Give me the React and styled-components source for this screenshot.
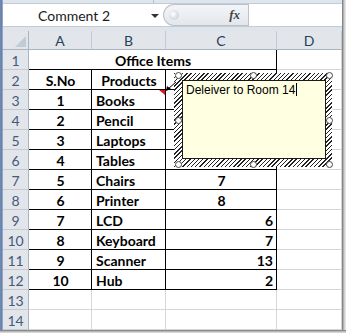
import React from 'react';
import styled, { createGlobalStyle } from 'styled-components';

const GlobalStyle = createGlobalStyle`
  html, body {
    margin: 0;
    padding: 0;
    background: #ffffff;
  }
`;

const Frame = styled.div`
  position: relative;
  width: 346px;
  height: 333px;
  overflow: hidden;
  display: flex;
  flex-direction: column;
  background: #ffffff;
  font-family: "Lato", "Liberation Sans", sans-serif;
`;

const Body = styled.div`
  display: flex;
  height: 330px;
`;

const LeftEdge = styled.div`
  width: 3px;
  background: linear-gradient(90deg, #8ea4c4 0, #4f6d9c 1px, #a9bbd4 3px);
`;

const RightShadow = styled.div`
  width: 4px;
  background: linear-gradient(90deg, #6f6f6f 0, #9a9a9a 1px, #c8c8c8 2px, #eeeeee 4px);
`;

const BottomShadow = styled.div`
  height: 3px;
  background: linear-gradient(180deg, #6f6f6f 0, #a8a8a8 1px, #e6e6e6 3px);
`;

const Main = styled.div`
  width: 339px;
  display: flex;
  flex-direction: column;
`;

const TopStrip = styled.div`
  height: 4px;
  display: flex;
  background: #dfe5ec;
  border-bottom: 1px solid #c3cbd5;
  box-sizing: border-box;
`;

const StripPart = styled.div`
  width: ${p => p.$w}px;
  border-right: 1px solid #b8c1cc;
`;

const FormulaBar = styled.div`
  height: 23px;
  display: flex;
  align-items: stretch;
  background: #ffffff;
  border-bottom: 1px solid #c3cbd5;
  box-sizing: border-box;
`;

const NameBox = styled.div`
  width: 160px;
  display: flex;
  align-items: center;
  justify-content: space-between;
  padding: 0 4px 0 35px;
  box-sizing: border-box;
  font-size: 14px;
  color: #1a1a1a;
`;

const DropArrow = styled.span`
  width: 0;
  height: 0;
  border-left: 4px solid transparent;
  border-right: 4px solid transparent;
  border-top: 4px solid #333;
  margin-top: 1px;
`;

const FxGroup = styled.div`
  width: 85px;
  display: flex;
  align-items: center;
  justify-content: space-between;
  padding: 0 8px 0 5px;
  box-sizing: border-box;
  border-radius: 11px 0 0 11px;
  border: 1px solid #b9c2cd;
  border-right: none;
  background: linear-gradient(180deg, #f3f5f8 0, #e3e7ec 100%);
`;

const Grip = styled.span`
  width: 10px;
  height: 10px;
  border-radius: 50%;
  background: radial-gradient(circle at 40% 40%, #ffffff 0, #d7dce2 60%, #b9c0c9 100%);
`;

const FxLabel = styled.span`
  font-family: "Liberation Serif", serif;
  font-style: italic;
  font-weight: bold;
  font-size: 13px;
  color: #444;
`;

const FormulaInput = styled.div`
  flex: 1;
  border-left: 1px solid #b9c2cd;
  background: #ffffff;
`;

const Gap = styled.div`
  height: 4px;
  background: #dfe4ea;
`;

const Sheet = styled.div`
  display: grid;
  grid-template-columns: 26px 63px 74px 111px 65px;
  grid-template-rows: 19px repeat(14, 20px);
`;

const Corner = styled.div`
  position: relative;
  background: #e2e6eb;
  border-right: 1px solid #a9b4c2;
  border-bottom: 1px solid #a9b4c2;
  box-sizing: border-box;
  &::after {
    content: '';
    position: absolute;
    right: 2px;
    bottom: 2px;
    border-left: 11px solid transparent;
    border-bottom: 11px solid #c2cad4;
  }
`;

const ColHeader = styled.div`
  display: flex;
  align-items: center;
  justify-content: center;
  background: #e2e6eb;
  border-right: 1px solid #c4cad2;
  border-bottom: 1px solid #a9b4c2;
  box-sizing: border-box;
  font-size: 14px;
  color: #27405e;
`;

const RowHeader = styled.div`
  display: flex;
  align-items: center;
  justify-content: center;
  padding-top: 1px;
  background: #e2e6eb;
  border-right: 1px solid #a9b4c2;
  border-bottom: 1px solid #c4cad2;
  box-sizing: border-box;
  font-size: 14px;
  color: #45597a;
`;

const Cell = styled.div`
  position: relative;
  display: flex;
  align-items: center;
  justify-content: ${p => p.$align === 'center' ? 'center' : p.$align === 'right' ? 'flex-end' : 'flex-start'};
  padding: 2px 3px 0 4px;
  grid-column: ${p => p.$span ? `span ${p.$span}` : 'auto'};
  border-right: 1px solid ${p => p.$boxed ? '#000000' : '#d6d6d6'};
  border-bottom: 1px solid ${p => p.$boxed ? '#000000' : '#d6d6d6'};
  box-sizing: border-box;
  font-size: 14px;
  font-weight: ${p => p.$bold ? 700 : 400};
  color: #000000;
  white-space: nowrap;
  overflow: hidden;
`;

const CommentMark = styled.span`
  position: absolute;
  top: 0;
  right: 0;
  border-left: 6px solid transparent;
  border-top: 5px solid #e8141c;
`;

const Comment = styled.div`
  position: absolute;
  left: 174px;
  top: 73px;
  width: 158px;
  height: 94px;
  padding: 7px 6px 8px 8px;
  box-sizing: border-box;
  background: repeating-linear-gradient(135deg, #222222 0 1px, #ffffff 1px 3px);
`;

const Note = styled.div`
  height: 100%;
  box-sizing: border-box;
  background: #ffffe1;
  border: 1px solid #1a1a1a;
  padding: 2px 3px;
  font-family: "Liberation Sans", Arial, sans-serif;
  font-size: 12px;
  line-height: 15px;
  color: #000;
`;

const Caret = styled.span`
  display: inline-block;
  width: 1px;
  height: 13px;
  margin-left: 1px;
  vertical-align: -2px;
  background: #000;
`;

const Handle = styled.span`
  position: absolute;
  left: ${p => p.$x}px;
  top: ${p => p.$y}px;
  width: 5px;
  height: 5px;
  border-radius: 50%;
  background: #ffffff;
  border: 1px solid #4a4a4a;
`;

const Pointer = styled.svg`
  position: absolute;
  left: 164px;
  top: 80px;
`;

const columns = ['A', 'B', 'C', 'D'];

const items = [
  [1, 'Books', '', ''],
  [2, 'Pencil', '', ''],
  [3, 'Laptops', '', ''],
  [4, 'Tables', '', ''],
  [5, 'Chairs', '7', 'center'],
  [6, 'Printer', '8', 'center'],
  [7, 'LCD', '6', 'right'],
  [8, 'Keyboard', '7', 'right'],
  [9, 'Scanner', '13', 'right'],
  [10, 'Hub', '2', 'right'],
];

const handles = [
  [1, -1], [76, -1], [152, -1],
  [1, 44], [152, 44],
  [1, 88], [76, 88], [152, 88],
];

export default function App() {
  return (
    <>
      <GlobalStyle />
      <Frame>
        <Body>
          <LeftEdge />
          <Main>
            <TopStrip>
              <StripPart $w={150} />
            </TopStrip>
            <FormulaBar>
              <NameBox>
                Comment 2
                <DropArrow />
              </NameBox>
              <FxGroup>
                <Grip />
                <FxLabel>fx</FxLabel>
              </FxGroup>
              <FormulaInput />
            </FormulaBar>
            <Gap />
            <Sheet>
              <Corner />
              {columns.map(c => <ColHeader key={c}>{c}</ColHeader>)}

              <RowHeader>1</RowHeader>
              <Cell $span={3} $bold $boxed $align="center">Office Items</Cell>
              <Cell />

              <RowHeader>2</RowHeader>
              <Cell $bold $boxed $align="center">S.No</Cell>
              <Cell $bold $boxed $align="center">Products</Cell>
              <Cell $bold $boxed $align="center" />
              <Cell />

              {items.map(([no, name, qty, align], i) => (
                <React.Fragment key={no}>
                  <RowHeader>{i + 3}</RowHeader>
                  <Cell $bold $boxed $align="center">{no}</Cell>
                  <Cell $bold $boxed>
                    {name}
                    {i === 0 && <CommentMark />}
                  </Cell>
                  <Cell $bold $boxed $align={align}>{qty}</Cell>
                  <Cell />
                </React.Fragment>
              ))}

              {[13, 14].map(r => (
                <React.Fragment key={r}>
                  <RowHeader>{r}</RowHeader>
                  <Cell />
                  <Cell />
                  <Cell />
                  <Cell />
                </React.Fragment>
              ))}
            </Sheet>
          </Main>
          <RightShadow />
        </Body>
        <BottomShadow />

        <Comment>
          <Note>
            Deleiver to Room 14<Caret />
          </Note>
          {handles.map(([x, y], i) => <Handle key={i} $x={x} $y={y} />)}
        </Comment>

        <Pointer width="14" height="14" viewBox="0 0 14 14">
          <line x1="12" y1="2" x2="4" y2="9" stroke="#000" strokeWidth="1" />
          <polygon points="2,11 3,6 7,9" fill="#000" />
        </Pointer>
      </Frame>
    </>
  );
}
